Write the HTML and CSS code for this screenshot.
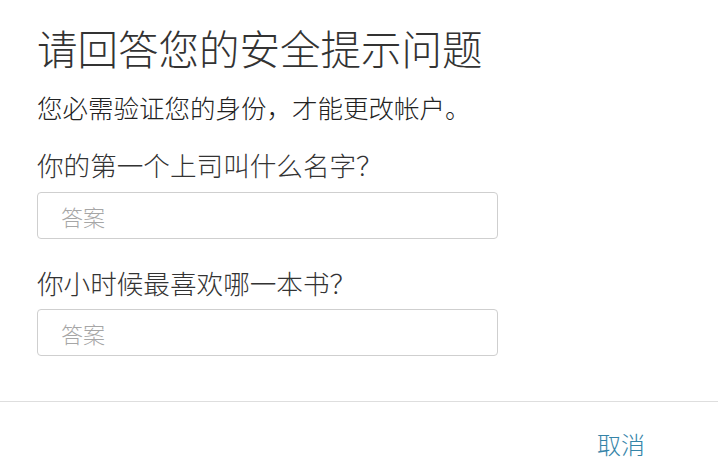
FILE: index.html
```html
<!DOCTYPE html>
<html lang="zh-CN">
<head>
<meta charset="utf-8">
<title>安全提示问题</title>
<link rel="stylesheet" href="styles.css">
</head>
<body>
<div class="page">
  <main class="content">
    <h1 class="title">请回答您的安全提示问题</h1>
    <p class="subtitle">您必需验证您的身份，才能更改帐户。</p>
    <label class="question q1" for="a1">你的第一个上司叫什么名字？</label>
    <input class="answer a1" id="a1" type="text" placeholder="答案">
    <label class="question q2" for="a2">你小时候最喜欢哪一本书？</label>
    <input class="answer a2" id="a2" type="text" placeholder="答案">
  </main>
  <footer class="footer">
    <button class="cancel" type="button">取消</button>
  </footer>
</div>
</body>
</html>
```

FILE: styles.css
```css
* { box-sizing: border-box; }
html, body {
  margin: 0;
  padding: 0;
  background: #ffffff;
}
body {
  font-family: "Noto Sans CJK SC", "Noto Sans", sans-serif;
  color: #333333;
}
.page {
  width: 718px;
  height: 471px;
  overflow: hidden;
  display: flex;
  flex-direction: column;
}
.content {
  display: flex;
  flex-direction: column;
  padding-left: 37px;
  padding-right: 180px;
}
.title {
  margin: 24px 0 0 0;
  font-size: 40.5px;
  line-height: 48px;
  font-weight: 300;
  color: #333333;
  white-space: nowrap;
}
.subtitle {
  margin: 18px 0 0 0;
  font-size: 25.5px;
  line-height: 34px;
  font-weight: 300;
  color: #222222;
  white-space: nowrap;
}
.question {
  display: block;
  font-size: 26.6px;
  line-height: 34px;
  font-weight: 300;
  color: #333333;
  white-space: nowrap;
}
.q1 { margin-top: 24px; }
.q2 { margin-top: 27px; }
.answer {
  display: block;
  width: 461px;
  height: 47px;
  margin: 10px 0 0 0;
  padding: 0 0 0 23px;
  border: 1px solid #cfcfcf;
  border-radius: 4px;
  background: #ffffff;
  font-family: "Noto Sans CJK SC", "Noto Sans", sans-serif;
  font-size: 22px;
  font-weight: 300;
  color: #333333;
  outline: none;
}
.a2 { margin-top: 9px; }
.answer::placeholder {
  color: #a6a6a6;
}
.footer {
  margin-top: 45px;
  border-top: 1px solid #dedede;
  display: flex;
  justify-content: flex-end;
  padding: 27px 73px 0 0;
}
.cancel {
  border: none;
  background: transparent;
  padding: 0;
  font-family: "Noto Sans CJK SC", "Noto Sans", sans-serif;
  font-size: 24px;
  line-height: 30px;
  font-weight: 300;
  color: #3584a8;
  cursor: pointer;
}
```
